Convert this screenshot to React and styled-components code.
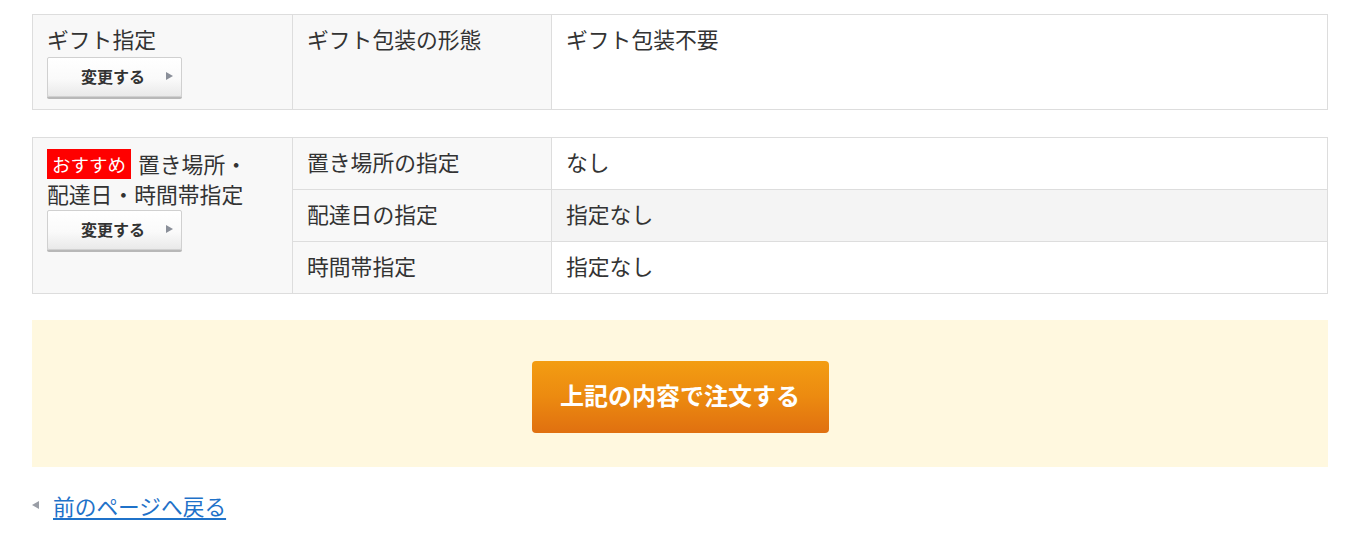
import React from "react";
import styled, { createGlobalStyle } from "styled-components";

const Global = createGlobalStyle`
  html, body { margin: 0; padding: 0; background: #fff; }
  body {
    font-family: "Noto Sans CJK JP", "Noto Sans", sans-serif;
    color: #333;
  }
`;

const Page = styled.div`
  width: 1296px;
  margin-left: 32px;
  padding-top: 14px;
`;

const Table = styled.table`
  width: 100%;
  border-collapse: collapse;
  table-layout: fixed;
  margin-bottom: ${(p) => p.$mb || 0}px;
  font-size: 21.8px;
  line-height: 30px;
`;

const Col = styled.col`
  width: ${(p) => (p.$w ? `${p.$w}px` : "auto")};
`;

const Th = styled.th`
  text-align: left;
  vertical-align: top;
  font-weight: normal;
  background: #f8f8f8;
  border: 1px solid #dddddd;
  padding: ${(p) => p.$pad || "9px 14px 12px"};
  white-space: nowrap;
`;

const Td = styled.td`
  vertical-align: top;
  background: ${(p) => (p.$shade ? "#f4f4f4" : "#fff")};
  border: 1px solid #dddddd;
  padding: ${(p) => p.$pad || "9px 14px 12px"};
`;

const ChangeButton = styled.button`
  display: flex;
  align-items: center;
  width: 135px;
  height: 40px;
  margin-top: ${(p) => p.$mt || 0}px;
  padding: 0 0 2px 33px;
  border: 1px solid #d0d0d0;
  border-radius: 2px;
  background: linear-gradient(#ffffff 0%, #fafafa 55%, #e9e9e9 100%);
  box-shadow: 0 2px 0 #b8b8b8;
  font-family: inherit;
  font-size: 16px;
  font-weight: bold;
  color: #333;
  cursor: pointer;
  box-sizing: border-box;
`;

const ArrowRight = styled.span`
  margin-left: 21px;
  width: 0;
  height: 0;
  border-top: 4px solid transparent;
  border-bottom: 4px solid transparent;
  border-left: 7px solid #8a8f99;
`;

const Badge = styled.span`
  display: inline-block;
  background: #ff0000;
  color: #fff;
  font-size: 18.5px;
  line-height: 30px;
  padding: 0 5px 0 5px;
  margin-right: 7px;
  vertical-align: top;
`;

const OrderArea = styled.div`
  margin-top: 26px;
  background: #fff8df;
  display: flex;
  justify-content: center;
  padding: 41px 0 34px;
`;

const OrderButton = styled.button`
  width: 297px;
  height: 72px;
  border: none;
  border-radius: 4px;
  background: linear-gradient(#f39d12 0%, #ec8a10 50%, #e07010 100%);
  color: #fff;
  font-family: inherit;
  font-size: 24px;
  font-weight: bold;
  padding: 0 0 5px;
  cursor: pointer;
`;

const BackRow = styled.div`
  display: flex;
  align-items: center;
  margin-top: 24px;
`;

const ArrowLeft = styled.span`
  width: 0;
  height: 0;
  border-top: 4px solid transparent;
  border-bottom: 4px solid transparent;
  border-right: 7px solid #9a9ea6;
  margin-right: 14px;
  margin-top: -2px;
`;

const BackLink = styled.a`
  font-size: 21.7px;
  line-height: 30px;
  color: #1f72c9;
  text-decoration: underline;
  text-underline-offset: 3px;
  cursor: pointer;
`;

function Cols() {
  return (
    <colgroup>
      <Col $w={260} />
      <Col $w={259} />
      <Col />
    </colgroup>
  );
}

export default function App() {
  return (
    <>
      <Global />
      <Page>
        <Table $mb={27}>
          <Cols />
          <tbody>
            <tr>
              <Th $pad="9px 14px 12px">
                ギフト指定
                <ChangeButton $mt={3}>
                  変更する
                  <ArrowRight />
                </ChangeButton>
              </Th>
              <Th>ギフト包装の形態</Th>
              <Td>ギフト包装不要</Td>
            </tr>
          </tbody>
        </Table>

        <Table>
          <Cols />
          <tbody>
            <tr>
              <Th rowSpan={3} $pad="11px 14px 11px">
                <Badge>おすすめ</Badge>置き場所・
                <br />
                配達日・時間帯指定
                <ChangeButton $mt={1}>
                  変更する
                  <ArrowRight />
                </ChangeButton>
              </Th>
              <Th>置き場所の指定</Th>
              <Td>なし</Td>
            </tr>
            <tr>
              <Th>配達日の指定</Th>
              <Td $shade>指定なし</Td>
            </tr>
            <tr>
              <Th>時間帯指定</Th>
              <Td>指定なし</Td>
            </tr>
          </tbody>
        </Table>

        <OrderArea>
          <OrderButton>上記の内容で注文する</OrderButton>
        </OrderArea>

        <BackRow>
          <ArrowLeft />
          <BackLink>前のページへ戻る</BackLink>
        </BackRow>
      </Page>
    </>
  );
}
